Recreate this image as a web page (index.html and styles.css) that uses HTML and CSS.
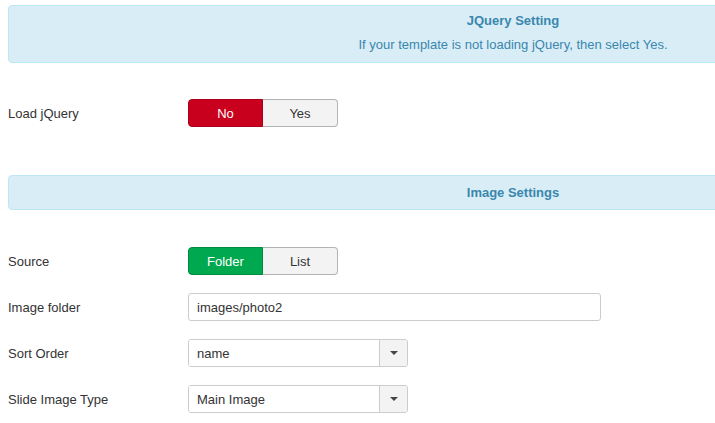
FILE: index.html
```html
<!DOCTYPE html>
<html>
	<head>
		<meta charset="utf-8">
		<title>Module settings</title>
		<link rel="stylesheet" href="styles.css">
	</head>
	<body>
		<div class="warp">
			<div class="alert">
				<h4 class="alert-title">JQuery Setting</h4>
				<p class="alert-text">If your template is not loading jQuery, then select Yes.</p>
			</div>

			<div class="row row-first">
				<label class="label">Load jQuery</label>
				<div class="btn-group">
					<span class="btn btn-no">No</span>
					<span class="btn">Yes</span>
				</div>
			</div>

			<div class="alert alert-small">
				<h4 class="alert-title">Image Settings</h4>
			</div>

			<div class="row row-first">
				<label class="label">Source</label>
				<div class="btn-group">
					<span class="btn btn-yes">Folder</span>
					<span class="btn">List</span>
				</div>
			</div>
			<div class="row">
				<label class="label">Image folder</label>
				<input class="input" type="text" value="images/photo2">
			</div>
			<div class="row">
				<label class="label">Sort Order</label>
				<div class="select">
					<span class="select-val">name</span>
					<span class="select-arrow"><i class="caret"></i></span>
				</div>
			</div>
			<div class="row">
				<label class="label">Slide Image Type</label>
				<div class="select">
					<span class="select-val">Main Image</span>
					<span class="select-arrow"><i class="caret"></i></span>
				</div>
			</div>
		</div>
	</body>
</html>
```
FILE: styles.css
```css
*{
	margin: 0;
	padding: 0;
	box-sizing: border-box;
}
body{
	background: #fff;
	font-family: "Liberation Sans", Arial, sans-serif;
	font-size: 13px;
	color: #333;
	overflow: hidden;
}
.warp{
	width: 1020px;
	padding: 5px 0 0 8px;
}
.alert{
	width: 1010px;
	background-color: #d9edf7;
	border: 1px solid #bce8f1;
	border-radius: 4px;
	color: #3a87ad;
	text-align: center;
	padding: 6px 0 8px;
}
.alert-small{
	margin-top: 48px;
	padding: 8px 0 7px;
}
.alert-title{
	font-size: 13px;
	line-height: 18px;
	font-weight: bold;
}
.alert-text{
	margin-top: 6px;
	line-height: 18px;
}
.row{
	display: flex;
	align-items: center;
	height: 28px;
	margin-top: 18px;
}
.row-first{
	margin-top: 36px;
}
.alert-small + .row-first{
	margin-top: 37px;
}
.label{
	width: 180px;
	flex: none;
}
.btn-group{
	display: flex;
	height: 28px;
}
.btn{
	width: 75px;
	display: flex;
	align-items: center;
	justify-content: center;
	background-color: #f3f3f3;
	border: 1px solid #b3b3b3;
	color: #333;
}
.btn:first-child{
	border-radius: 4px 0 0 4px;
}
.btn:last-child{
	border-left: 0;
	border-radius: 0 4px 4px 0;
}
.btn-no{
	background-color: #c9001d;
	border-color: #a8001a;
	color: #fff;
}
.btn-yes{
	background-color: #00a94f;
	border-color: #008c40;
	color: #fff;
}
.input{
	width: 413px;
	height: 28px;
	border: 1px solid #ccc;
	border-radius: 3px;
	padding: 0 8px;
	font-family: inherit;
	font-size: 13px;
	color: #333;
	outline: none;
}
.select{
	width: 220px;
	height: 28px;
	display: flex;
	border: 1px solid #ccc;
	border-radius: 3px;
	overflow: hidden;
}
.select-val{
	flex: 1;
	display: flex;
	align-items: center;
	padding-left: 8px;
	background: #fff;
}
.select-arrow{
	width: 28px;
	display: flex;
	align-items: center;
	justify-content: center;
	background-color: #f3f3f3;
	border-left: 1px solid #ccc;
}
.caret{
	width: 0;
	height: 0;
	border-left: 4px solid transparent;
	border-right: 4px solid transparent;
	border-top: 4px solid #444;
}
```
